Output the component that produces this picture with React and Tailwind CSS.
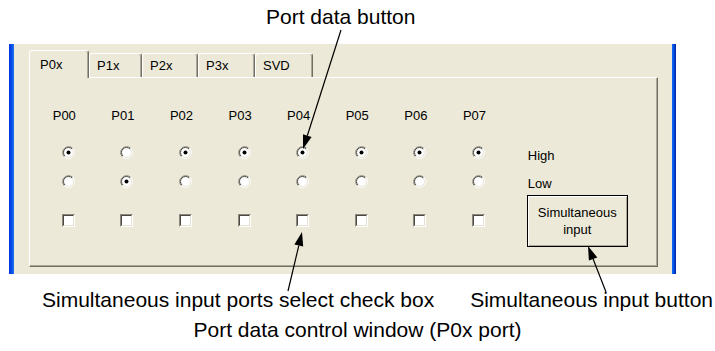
import React from 'react'

const PORTS = [
  { name: 'P00', high: true },
  { name: 'P01', high: false },
  { name: 'P02', high: true },
  { name: 'P03', high: true },
  { name: 'P04', high: true },
  { name: 'P05', high: true },
  { name: 'P06', high: true },
  { name: 'P07', high: true },
]

const TABS = [
  { label: 'P0x', active: true, width: 'w-[60px]' },
  { label: 'P1x', width: 'w-[53px]' },
  { label: 'P2x', width: 'w-[56px]' },
  { label: 'P3x', width: 'w-[57px]' },
  { label: 'SVD', width: 'w-[58px]' },
]

function Radio({ checked }) {
  return (
    <svg width="13" height="13" viewBox="0 0 13 13" className="block">
      <circle cx="6.5" cy="6.5" r="6" fill="#fff" />
      <path d="M2.26 10.74A6 6 0 0 1 10.74 2.26" fill="none" stroke="#8a877c" />
      <path d="M10.74 2.26A6 6 0 0 1 2.26 10.74" fill="none" stroke="#fff" />
      <path d="M2.96 10.04A5 5 0 0 1 10.04 2.96" fill="none" stroke="#4a4840" />
      <path d="M10.04 2.96A5 5 0 0 1 2.96 10.04" fill="none" stroke="#e4e1d4" />
      {checked ? <circle cx="6.5" cy="6.5" r="2" fill="#000" /> : null}
    </svg>
  )
}

function Checkbox() {
  return (
    <div className="h-[13px] w-[13px] border border-t-[#8a877c] border-l-[#8a877c] border-r-white border-b-white">
      <div className="h-full w-full border border-t-[#4a4840] border-l-[#4a4840] border-r-[#e4e1d4] border-b-[#e4e1d4] bg-white" />
    </div>
  )
}

function Tab({ label, active, width }) {
  return (
    <div
      className={`relative ${width} rounded-t-[3px] border-l border-t border-r border-l-white border-t-white border-r-[#716f64] bg-[#ece9d8] shadow-[inset_-1px_0_0_#aca899] ${
        active ? 'z-10 -mb-px h-[28px] pl-[10px] pt-[6px]' : 'h-[24px] pl-[7px] pt-[4px]'
      }`}
    >
      <span className="block leading-[15px]">{label}</span>
    </div>
  )
}

function Arrows() {
  return (
    <svg
      width="715"
      height="351"
      viewBox="0 0 715 351"
      className="pointer-events-none absolute left-0 top-0"
    >
      <line x1="341" y1="30" x2="307.3" y2="135.7" stroke="#000" strokeWidth="1.2" />
      <polygon points="303,149 311.6,137.1 303,134.3" fill="#000" />
      <line x1="288" y1="291" x2="298.8" y2="245.6" stroke="#000" strokeWidth="1.2" />
      <polygon points="302,232 303.2,246.6 294.4,244.6" fill="#000" />
      <line x1="606" y1="292" x2="593.1" y2="259" stroke="#000" strokeWidth="1.2" />
      <polygon points="588,246 597.3,257.4 588.9,260.6" fill="#000" />
    </svg>
  )
}

export default function App() {
  return (
    <div className="relative h-[351px] w-[715px] overflow-hidden bg-white font-['Liberation_Sans',Arial,sans-serif] text-black">
      <div className="h-[44px] pl-[266px] pt-[5px] text-[21px] leading-[24px]">
        Port data button
      </div>

      {/* window crop */}
      <div className="ml-[9px] flex h-[230px] w-[667px]">
        <div className="w-[5px] bg-[linear-gradient(90deg,#0831d9,#0055ea_60%,#2b71f0)]" />
        <div className="flex-1 bg-[#ece9d8] pl-[15px] pr-[14px] pt-[6px] text-[13px]">
          <div className="flex h-[27px] items-end">
            {TABS.map((t) => (
              <Tab key={t.label} {...t} />
            ))}
          </div>
          <div className="h-[190px] border border-t-white border-l-white border-r-[#716f64] border-b-[#716f64] shadow-[inset_-1px_-1px_0_#aca899]">
            <div className="flex pl-[9px]">
              {PORTS.map((p) => (
                <div key={p.name} className="flex w-[58.6px] flex-col items-center pt-[30px]">
                  <div className="mr-[8px] h-[15px] leading-[15px]">{p.name}</div>
                  <div className="mt-[23px]">
                    <Radio checked={p.high} />
                  </div>
                  <div className="mt-[16px]">
                    <Radio checked={!p.high} />
                  </div>
                  <div className="mt-[26px]">
                    <Checkbox />
                  </div>
                </div>
              ))}
              <div className="ml-[20px] flex flex-col pt-[70px]">
                <div className="h-[15px] leading-[15px]">High</div>
                <div className="mt-[13px] h-[15px] leading-[15px]">Low</div>
                <div className="-ml-px mt-[4px] flex h-[52px] w-[101px] items-center justify-center border border-black text-center leading-[17px] shadow-[inset_1px_1px_0_#fff,inset_-1px_-1px_0_#aca899]">
                  Simultaneous
                  <br />
                  input
                </div>
              </div>
            </div>
          </div>
        </div>
        <div className="w-[4px] bg-[linear-gradient(90deg,#166aee,#0055ea_40%,#001ea0)]" />
      </div>

      <div className="mt-[14px] flex h-[24px] text-[21px] leading-[24px]">
        <div className="pl-[42px]">Simultaneous input ports select check box</div>
        <div className="ml-auto pr-[2px]">Simultaneous input button</div>
      </div>
      <div className="mt-[6px] text-center text-[21px] leading-[24px]">
        Port data control window (P0x port)
      </div>

      <Arrows />
    </div>
  )
}
